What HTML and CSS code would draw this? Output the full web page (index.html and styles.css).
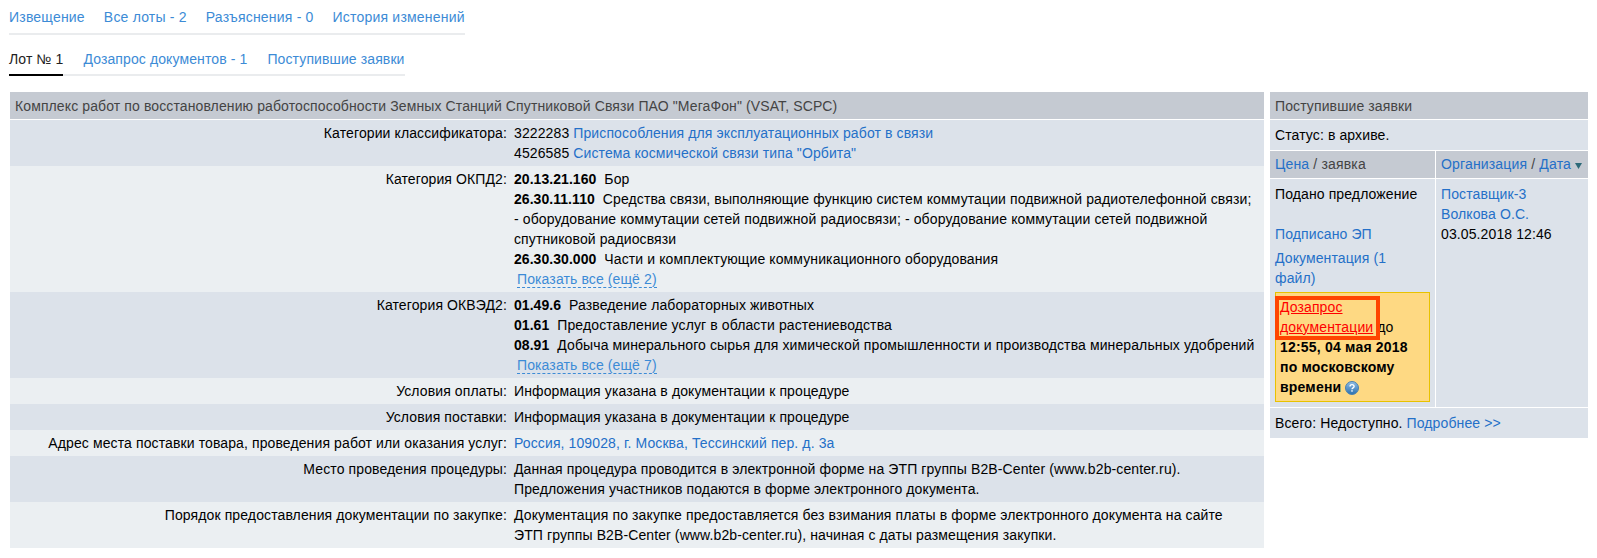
FILE: index.html
```html
<!DOCTYPE html>
<html lang="ru">
<head>
<meta charset="utf-8">
<title>Лот № 1</title>
<link rel="stylesheet" href="styles.css">
</head>
<body>
<nav class="tabs tabs-top">
  <a href="#">Извещение</a>
  <a href="#">Все лоты - 2</a>
  <a href="#">Разъяснения - 0</a>
  <a href="#">История изменений</a>
</nav>
<nav class="tabs tabs-sub">
  <a href="#" class="active">Лот № 1</a>
  <a href="#">Дозапрос документов - 1</a>
  <a href="#">Поступившие заявки</a>
</nav>
<div class="layout">
  <main class="lot">
    <div class="panel-head">Комплекс работ по восстановлению работоспособности Земных Станций Спутниковой Связи ПАО "МегаФон" (VSAT, SCPC)</div>
    <div class="row dark">
      <div class="label">Категории классификатора:</div>
      <div class="value">3222283 <a href="#">Приспособления для эксплуатационных работ в связи</a><br>4526585 <a href="#">Система космической связи типа "Орбита"</a></div>
    </div>
    <div class="row light">
      <div class="label">Категория ОКПД2:</div>
      <div class="value"><b>20.13.21.160</b>&nbsp; Бор<br><b>26.30.11.110</b>&nbsp; Средства связи, выполняющие функцию систем коммутации подвижной радиотелефонной связи; <span class="nb">- оборудование</span> коммутации сетей подвижной радиосвязи; <span class="nb">- оборудование</span> коммутации сетей подвижной спутниковой радиосвязи<br><b>26.30.30.000</b>&nbsp; Части и комплектующие коммуникационного оборудования<br><a href="#" class="more">Показать все (ещё 2)</a></div>
    </div>
    <div class="row dark">
      <div class="label">Категория ОКВЭД2:</div>
      <div class="value"><b>01.49.6</b>&nbsp; Разведение лабораторных животных<br><b>01.61</b>&nbsp; Предоставление услуг в области растениеводства<br><b>08.91</b>&nbsp; Добыча минерального сырья для химической промышленности и производства минеральных удобрений<br><a href="#" class="more">Показать все (ещё 7)</a></div>
    </div>
    <div class="row light">
      <div class="label">Условия оплаты:</div>
      <div class="value">Информация указана в документации к процедуре</div>
    </div>
    <div class="row dark">
      <div class="label">Условия поставки:</div>
      <div class="value">Информация указана в документации к процедуре</div>
    </div>
    <div class="row light">
      <div class="label">Адрес места поставки товара, проведения работ или оказания услуг:</div>
      <div class="value"><a href="#">Россия, 109028, г. Москва, Тессинский пер. д. 3а</a></div>
    </div>
    <div class="row dark">
      <div class="label">Место проведения процедуры:</div>
      <div class="value">Данная процедура проводится в электронной форме на ЭТП группы B2B-Center (www.b2b-center.ru).<br>Предложения участников подаются в форме электронного документа.</div>
    </div>
    <div class="row light">
      <div class="label">Порядок предоставления документации по закупке:</div>
      <div class="value">Документация по закупке предоставляется без взимания платы в форме электронного документа на сайте<br>ЭТП группы B2B-Center (www.b2b-center.ru), начиная с даты размещения закупки.</div>
    </div>
  </main>
  <aside class="bids">
    <div class="panel-head">Поступившие заявки</div>
    <div class="status">Статус: в архиве.</div>
    <div class="bid-grid">
      <div class="bid-th"><a href="#">Цена</a> / заявка</div>
      <div class="bid-th"><a href="#">Организация</a> / <a href="#">Дата</a> <svg class="sort" width="7" height="6" viewBox="0 0 7 6"><path d="M0 0h7L3.500 6z" fill="#2d6a78"/></svg></div>
      <div class="bid-td">
        <div class="offer">Подано предложение</div>
        <a href="#">Подписано ЭП</a>
        <div class="docs"><a href="#">Документация (1 файл)</a></div>
        <div class="notice">
          <a href="#" class="red">Дозапрос документации</a> до <b>12:55, 04 мая 2018 по московскому времени</b>
          <svg class="help" width="14" height="14" viewBox="0 0 14 14"><defs><linearGradient id="hg" x1="0" y1="0" x2="0" y2="1"><stop offset="0" stop-color="#92bfe6"/><stop offset="1" stop-color="#2a70b0"/></linearGradient></defs><circle cx="7" cy="7" r="6.500" fill="url(#hg)" stroke="#4a80b0"/><path d="M5 5.400C5 4.200 6 3.600 7 3.600s2.100.6 2.100 1.800C9.100 6.900 7 6.800 7 8.300" fill="none" stroke="#fff" stroke-width="1.400"/><rect x="6.300" y="9.200" width="1.400" height="1.500" fill="#fff"/></svg>
          <span class="callout"></span>
        </div>
      </div>
      <div class="bid-td">
        <a href="#">Поставщик-3</a><br>
        <a href="#">Волкова О.С.</a><br>
        03.05.2018 12:46
      </div>
    </div>
    <div class="total">Всего: Недоступно. <a href="#">Подробнее &gt;&gt;</a></div>
  </aside>
</div>
</body>
</html>
```
FILE: styles.css
```css
* { box-sizing: border-box; }

body {
  margin: 0;
  background: #fff;
  color: #000;
  font: 14px/20px "Liberation Sans", Arial, sans-serif;
  letter-spacing: 0.11px;
}

b {
  letter-spacing: 0.05px;
}

a {
  color: #2470c8;
  text-decoration: none;
}

.nb { white-space: nowrap; }

.tabs {
  display: flex;
  gap: 20px;
  width: max-content;
  margin-left: 9px;
  border-bottom: 2px solid #eaecee;
}

.tabs a {
  color: #3c8bd6;
  display: block;
}

.tabs-top {
  gap: 19px;
  height: 35px;
  padding-top: 7px;
  letter-spacing: 0.2px;
}

.tabs-sub {
  margin-top: 14px;
  height: 27px;
}

.tabs-sub a {
  height: 27px;
}

.tabs-sub a.active {
  color: #222;
  border-bottom: 2px solid #000;
}

.layout {
  display: flex;
  align-items: flex-start;
  gap: 6px;
  margin: 16px 0 0 10px;
}

.lot { width: 1254px; }
.bids { width: 318px; }

.panel-head {
  height: 28px;
  padding: 4px 5px 3px;
  background: #c5cad2;
  border-bottom: 1px solid #fff;
  color: #444;
}

.row {
  display: grid;
  grid-template-columns: 497px 1fr;
  column-gap: 7px;
  padding: 3px 0;
}

.dark { background: #dce2ea; }
.light { background: #ebeff2; }

.label { text-align: right; }

.more {
  margin-left: 3px;
  color: #3c8bd6;
  border-bottom: 1px dashed #3c8bd6;
}

.status {
  height: 31px;
  padding: 5px;
  background: #dce2ea;
  border-bottom: 1px solid #fff;
}

.bid-grid {
  display: grid;
  grid-template-columns: 165px 153px;
}

.bid-th {
  height: 28px;
  padding: 3px 5px;
  background: #c5cad2;
  border-bottom: 1px solid #fff;
  color: #444;
  white-space: nowrap;
  letter-spacing: 0.16px;
}

.bid-th + .bid-th,
.bid-td + .bid-td {
  border-left: 1px solid #fff;
}

.bid-td {
  padding: 5px;
  background: #dce2ea;
  height: 228px;
}

.offer { margin-bottom: 20px; }

.docs {
  margin-top: 4px;
  margin-right: 10px;
}

.notice {
  position: relative;
  width: 155px;
  height: 110px;
  margin-top: 4px;
  padding: 4px;
  background: #fed983;
  border: 1px solid #e8c200;
}

.notice b { letter-spacing: 0.2px; }

.red {
  color: #f00;
  text-decoration: underline;
}

.help { vertical-align: -3px; }

.callout {
  position: absolute;
  left: -1px;
  top: 3px;
  width: 105px;
  height: 44px;
  border: 4px solid #ff4500;
}

.total {
  height: 30px;
  margin-top: 1px;
  padding: 5px;
  background: #dce2ea;
}
```
